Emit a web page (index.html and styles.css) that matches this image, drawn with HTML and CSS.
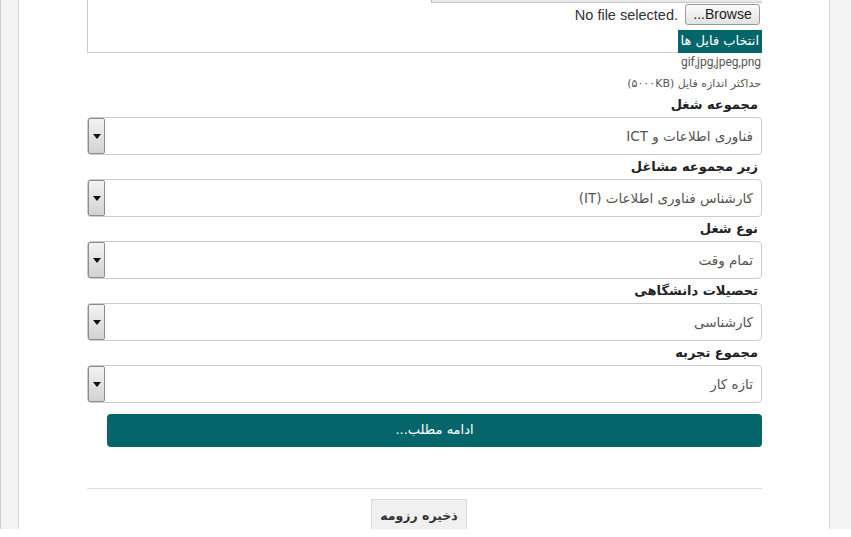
FILE: index.html
```html
<!DOCTYPE html>
<html lang="fa">
<head>
<meta charset="utf-8">
<title>رزومه</title>
<link rel="stylesheet" href="styles.css">
</head>
<body>
<div class="frame">
  <div class="page">
    <div class="col" dir="rtl">
      <div class="upload">
        <div class="upload-bar"></div>
        <div class="file-row">
          <span class="file-btn">Browse...</span>
          <span class="file-name" dir="ltr">No file selected.</span>
        </div>
        <div class="label-row"><span class="file-label">انتخاب فایل ها</span></div>
      </div>
      <div class="hint hint-types">gif,jpg,jpeg,png</div>
      <div class="hint hint-size">حداکثر اندازه فایل (۵۰۰۰KB)</div>

      <div class="field">
        <div class="field-label">مجموعه شغل</div>
        <div class="select"><span class="value">فناوری اطلاعات و ICT</span><span class="arrow"><span class="tri"></span></span></div>
      </div>
      <div class="field">
        <div class="field-label">زیر مجموعه مشاغل</div>
        <div class="select"><span class="value">کارشناس فناوری اطلاعات (IT)</span><span class="arrow"><span class="tri"></span></span></div>
      </div>
      <div class="field">
        <div class="field-label">نوع شغل</div>
        <div class="select"><span class="value">تمام وقت</span><span class="arrow"><span class="tri"></span></span></div>
      </div>
      <div class="field">
        <div class="field-label">تحصیلات دانشگاهی</div>
        <div class="select"><span class="value">کارشناسی</span><span class="arrow"><span class="tri"></span></span></div>
      </div>
      <div class="field">
        <div class="field-label">مجموع تجربه</div>
        <div class="select"><span class="value">تازه کار</span><span class="arrow"><span class="tri"></span></span></div>
      </div>

      <div class="more-btn">ادامه مطلب...</div>

      <div class="divider"></div>
      <div class="save-row"><span class="save-btn">ذخیره رزومه</span></div>
    </div>
  </div>
</div>
</body>
</html>
```

FILE: styles.css
```css
* { box-sizing: border-box; }

html, body {
  margin: 0;
  padding: 0;
  background: #ffffff;
}

body {
  font-family: "DejaVu Sans", "Noto Sans", sans-serif;
  color: #333;
}

.frame {
  height: 529px;
  overflow: hidden;
  background: #f4f4f4;
  border-left: 1px solid #cfcfcf;
  padding: 0 21px 0 17px;
}

.page {
  height: 100%;
  background: #ffffff;
  border-left: 1px solid #d6d6d6;
  border-right: 1px solid #d6d6d6;
  padding: 0 67px 0 68px;
}

.col {
  direction: rtl;
}

/* upload box */
.upload {
  border-left: 1px solid #cccccc;
  border-bottom: 1px solid #cccccc;
  height: 53px;
}

.upload-bar {
  width: 331px;
  height: 3px;
  background: #e8e8e8;
  border-bottom: 1px solid #c8c8c8;
  border-left: 1px solid #b8b8b8;
}

.file-row {
  display: flex;
  align-items: center;
  gap: 7px;
  margin-top: 1px;
  padding-right: 2px;
  height: 21px;
}

.file-btn {
  width: 75px;
  height: 21px;
  border: 1px solid #9a9a9a;
  border-radius: 3px;
  background: linear-gradient(#fbfbfb, #e2e2e2);
  font-family: "Liberation Sans", Arial, sans-serif;
  font-size: 14px;
  line-height: 19px;
  text-align: center;
  color: #222;
}

.file-name {
  font-family: "Liberation Sans", Arial, sans-serif;
  font-size: 14.5px;
  color: #333;
}

.label-row {
  margin-top: 5px;
  height: 23px;
  position: relative;
}

.file-label {
  display: inline-block;
  height: 23px;
  padding: 0 3px;
  background: #04666a;
  color: #ffffff;
  font-size: 13px;
  line-height: 22px;
}

.hint {
  color: #555;
  text-align: right;
  padding-right: 1px;
}

.hint-types {
  font-family: Roboto, "DejaVu Sans", sans-serif;
  font-size: 12px;
  line-height: 18px;
}

.hint-size {
  margin-top: 4px;
  font-size: 11px;
  line-height: 18px;
}

/* fields */
.field-label {
  height: 24px;
  font-size: 13px;
  font-weight: bold;
  line-height: 24px;
  color: #222;
  padding-right: 4px;
}

.select {
  display: flex;
  height: 38px;
  border: 1px solid #cccccc;
  border-radius: 4px;
  background: #fff;
}

.value {
  flex: 1;
  text-align: right;
  padding-right: 8px;
  font-size: 13.5px;
  line-height: 37px;
  color: #555;
}

.arrow {
  width: 17px;
  height: 36px;
  border: 1px solid #8c8c8c;
  border-radius: 2px;
  background: linear-gradient(#f3f3f3, #d2d2d2);
  display: flex;
  align-items: center;
  justify-content: center;
}

.tri {
  width: 0;
  height: 0;
  border-left: 4px solid transparent;
  border-right: 4px solid transparent;
  border-top: 5px solid #111;
}

.more-btn {
  margin-top: 11px;
  margin-left: 20px;
  height: 33px;
  border-radius: 4px;
  background: #04666a;
  color: #ffffff;
  text-align: center;
  font-size: 13px;
  line-height: 32px;
}

.divider {
  margin-top: 41px;
  border-top: 1px solid #dddddd;
}

.save-row {
  display: flex;
  justify-content: center;
  padding-right: 11px;
  margin-top: 10px;
}

.save-btn {
  width: 96px;
  height: 34px;
  background: #f0f0f0;
  border: 1px solid #dcdcdc;
  text-align: center;
  font-size: 12.5px;
  font-weight: bold;
  line-height: 32px;
  color: #333;
}
```
